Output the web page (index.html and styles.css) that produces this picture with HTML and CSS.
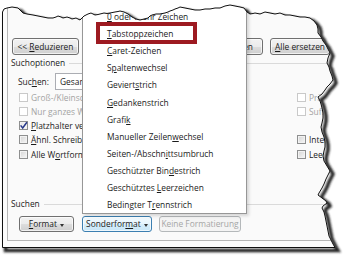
FILE: index.html
```html
<!DOCTYPE html>
<html lang="de">
<head>
    <meta charset="UTF-8">
    <title>Suchen und Ersetzen - Sonderformat</title>
    <link rel="stylesheet" href="styles.css">
</head>
<body>
    <div class="shot">
        <div class="window">
            <div class="client">
                <div class="actions">
                    <button class="btn reduce">&lt;&lt; <u>R</u>eduzieren</button>
                    <button class="btn replace"><u>E</u>rsetzen</button>
                    <button class="btn replace-all"><u>A</u>lle ersetzen</button>
                </div>

                <div class="group-title">Suchoptionen</div>

                <div class="search-row">
                    <span class="label">Suc<u>h</u>en:</span>
                    <div class="select">Gesamt</div>
                </div>

                <div class="options">
                    <div class="col col-left">
                        <div class="check disabled"><span class="box"></span>Groß-/Kleinschreibung beachten</div>
                        <div class="check disabled"><span class="box"></span>Nur ganzes Wort suchen</div>
                        <div class="check checked">
                            <span class="box"><svg viewBox="0 0 7 7"><path d="M0.6 3.4 L2.7 6 L6.9 0.2" fill="none" stroke="#27388a" stroke-width="1.5"/></svg></span>
                            <span><u>P</u>latzhalter verwenden</span>
                        </div>
                        <div class="check"><span class="box"></span><span><u>Ä</u>hnl. Schreibweise (Englisch)</span></div>
                        <div class="check"><span class="box"></span><span>Alle W<u>o</u>rtformen suchen (Englisch)</span></div>
                    </div>
                    <div class="col col-right">
                        <div class="check disabled"><span class="box"></span>Präfix berücksichtigen</div>
                        <div class="check disabled"><span class="box"></span>Suffix berücksichtigen</div>
                        <div class="check"></div>
                        <div class="check"><span class="box"></span>Interpunktionszeichen ignorieren</div>
                        <div class="check"><span class="box"></span>Leerzeichen ignorieren</div>
                    </div>
                </div>

                <div class="group-title find-title">Suchen</div>

                <div class="format-row">
                    <button class="btn format"><u>F</u>ormat <span class="caret"></span></button>
                    <button class="btn special">Sonderfor<u>m</u>at <span class="caret"></span></button>
                    <button class="btn none" disabled>Keine Formatierung</button>
                </div>
            </div>
        </div>

        <!-- Sonderformat dropdown -->
        <ul class="menu">
            <li><u>0</u> oder mehr Zeichen</li>
            <li><u>T</u>abstoppzeichen</li>
            <li><u>C</u>aret-Zeichen</li>
            <li>S<u>p</u>altenwechsel</li>
            <li>Geviert<u>s</u>trich</li>
            <li><u>G</u>edankenstrich</li>
            <li>Grafi<u>k</u></li>
            <li>Manueller Zeilen<u>w</u>echsel</li>
            <li>Seiten-/Abschn<u>i</u>ttsumbruch</li>
            <li>Geschützter Bin<u>d</u>estrich</li>
            <li>Geschütztes <u>L</u>eerzeichen</li>
            <li>Bedingter T<u>r</u>ennstrich</li>
        </ul>

        <div class="highlight"></div>

        <!-- torn paper edge with shadow -->
        <svg class="torn" width="350" height="260" viewBox="0 0 350 260">
            <defs>
                <polygon id="edge" points="2.5,247.5 2.5,12 4,9 7,8 12,7 18,8 21,11 23,13 27,14 30,14.5 33,15 38,16 43,17 48,18 53,18 56,17 58,16 61,17 63,18 67,17 70,18 72,19 76,18 80,20 82,18 84,16 88,14 91,13 95,15 98,14.5 100,14 104,13 107,13.5 110,13 115,12 118,11.5 120,11 124,12 128,14 132,17 136,19 140,20 144,19 148,18 150,16 152,15 156,14 160,14 165,13 168,12 170,11 173,10 175,9 178,8 180,7 185,8 190,9 195,10 200,10 205,9 210,9 215,8 220,8 225,6 230,5 235,6 240,7 244,8 247,12 250,14 253,13.5 255,13 260,14 265,12 270,13 275,14 280,13 285,15 290,15 295,16 300,17 305,17 310,18 314,21 317,25 318,29 318,33 321,37 323,41 326,45 328,49 330,53 328,58 327,63 329,67 330,71 332,76 333,80 330,84 327,87 325,90 322,94 318,97 320,101 321,104 322,108 323,113 323,118 322,123 321,127 322,132 324,137 325,142 325,147 324,151 323,156 324,161 327,166 330,171 328,175 326,179 324,184 322,188 319,193 318,195 322,198 326,201 327,203 323,206 322,208 324,212 325,216 326,221 327,226 328,231 329,236 331,240 333,244 335,247.5"/>
                <mask id="outside">
                    <rect width="350" height="260" fill="#fff"/>
                    <use href="#edge" fill="#000"/>
                </mask>
                <filter id="soft" x="-20%" y="-20%" width="140%" height="140%">
                    <feGaussianBlur stdDeviation="1.1"/>
                </filter>
            </defs>
            <rect width="350" height="260" fill="#fff" mask="url(#outside)"/>
            <g mask="url(#outside)">
                <use href="#edge" transform="translate(3 3)" fill="none" stroke="#222" stroke-width="3.5" filter="url(#soft)"/>
            </g>
            <use href="#edge" fill="none" stroke="#111" stroke-width="1"/>
        </svg>
    </div>
</body>
</html>
```

FILE: styles.css
```css
* {
    margin: 0;
    padding: 0;
    box-sizing: border-box;
}

body {
    background: #ffffff;
    font-family: "Open Sans", "Noto Sans", sans-serif;
    font-size: 8.4px;
    color: #1b1b1b;
}

.shot {
    position: relative;
    width: 350px;
    height: 260px;
    overflow: hidden;
}

.window {
    width: 346px;
    height: 248px;
    margin-left: 2px;
    padding: 0 0 7px 5px;
    background: #fcfcfc;
}

.client {
    height: 241px;
    padding-top: 38px;
    border-left: 1px solid #b7b7b7;
    border-bottom: 1px solid #b7b7b7;
    background: #fafafa;
    overflow: hidden;
    white-space: nowrap;
}

/* buttons */
.btn {
    font: inherit;
    color: inherit;
    height: 17px;
    line-height: 15px;
    border: 1px solid #707070;
    border-radius: 3px;
    background: linear-gradient(#f2f2f2, #ebebeb 50%, #dddddd 51%, #cfcfcf);
    box-shadow: inset 0 0 0 1px rgba(255, 255, 255, 0.7);
    text-align: center;
    white-space: nowrap;
    flex: none;
}

.actions {
    display: flex;
    height: 17px;
    padding-left: 4px;
}

.reduce {
    width: 67px;
}

.replace {
    width: 60px;
    margin-left: 124px;
    text-align: right;
    padding-right: 9px;
}

.replace-all {
    width: 60px;
    margin-left: 7px;
}

/* group titles with rule */
.group-title {
    display: flex;
    align-items: center;
    gap: 4px;
    height: 12px;
    line-height: 12px;
    margin-top: 2px;
    padding-left: 3px;
}

.group-title::after {
    content: "";
    flex: 1;
    height: 1px;
    background: #dadada;
}

.find-title {
    margin-top: 37px;
}

.search-row {
    display: flex;
    align-items: center;
    height: 17px;
    margin-top: 4px;
    padding-left: 10px;
}

.label {
    width: 37px;
}

.select {
    width: 140px;
    height: 17px;
    line-height: 15px;
    padding-left: 4px;
    border: 1px solid #abadb3;
    background: #ffffff;
}

/* checkboxes */
.options {
    display: flex;
    padding-left: 11px;
}

.col {
    overflow: hidden;
}

.col-left {
    width: 278px;
    flex: none;
}

.col-right {
    flex: 1;
}

.check {
    display: flex;
    align-items: center;
    gap: 3px;
    height: 14.25px;
}

.box {
    width: 9px;
    height: 9px;
    flex: none;
    border: 1px solid #8e8f8f;
    background: linear-gradient(135deg, #d4d4d4, #f7f7f7);
    box-shadow: inset 0 0 0 1px #f2f2f2;
}

.box svg {
    display: block;
    width: 7px;
    height: 7px;
    overflow: visible;
}

.checked .box {
    background: linear-gradient(135deg, #e6e6e6, #fbfbfb);
}

.disabled {
    color: #a3a3a3;
}

.disabled .box {
    border-color: #c9c9c9;
    background: #ffffff;
    box-shadow: none;
}

.format-row {
    display: flex;
    height: 16px;
    margin-top: 6px;
    padding-left: 11px;
}

.format-row .btn {
    height: 16px;
    line-height: 14px;
}

.format {
    width: 55px;
}

.special {
    width: 70px;
    margin-left: 8px;
    border-color: #3c7fb1;
    background: linear-gradient(#f2fafe, #e6f5fd 50%, #d6eefb 51%, #c8e6f7);
}

.none {
    width: 82px;
    margin-left: 7px;
    border-color: #b4b8ba;
    background: #f4f4f4;
    color: #a6a6a6;
    box-shadow: none;
}

.caret {
    display: inline-block;
    border-left: 2.5px solid transparent;
    border-right: 2.5px solid transparent;
    border-top: 3px solid #333333;
    vertical-align: middle;
    margin-left: 1px;
}

/* dropdown menu */
.menu {
    position: absolute;
    left: 82px;
    top: -10px;
    width: 165px;
    padding-top: 17.1px;
    list-style: none;
    background: #ffffff;
    border: 1px solid #979797;
    box-shadow: 2px 2px 3px rgba(0, 0, 0, 0.15);
}

.menu li {
    height: 17.1px;
    line-height: 17.1px;
    padding-left: 24px;
    white-space: nowrap;
}

.highlight {
    position: absolute;
    left: 96px;
    top: 22px;
    width: 101px;
    height: 22px;
    border: 4px solid #9d1a21;
}

.torn {
    position: absolute;
    left: 0;
    top: 0;
}
```
